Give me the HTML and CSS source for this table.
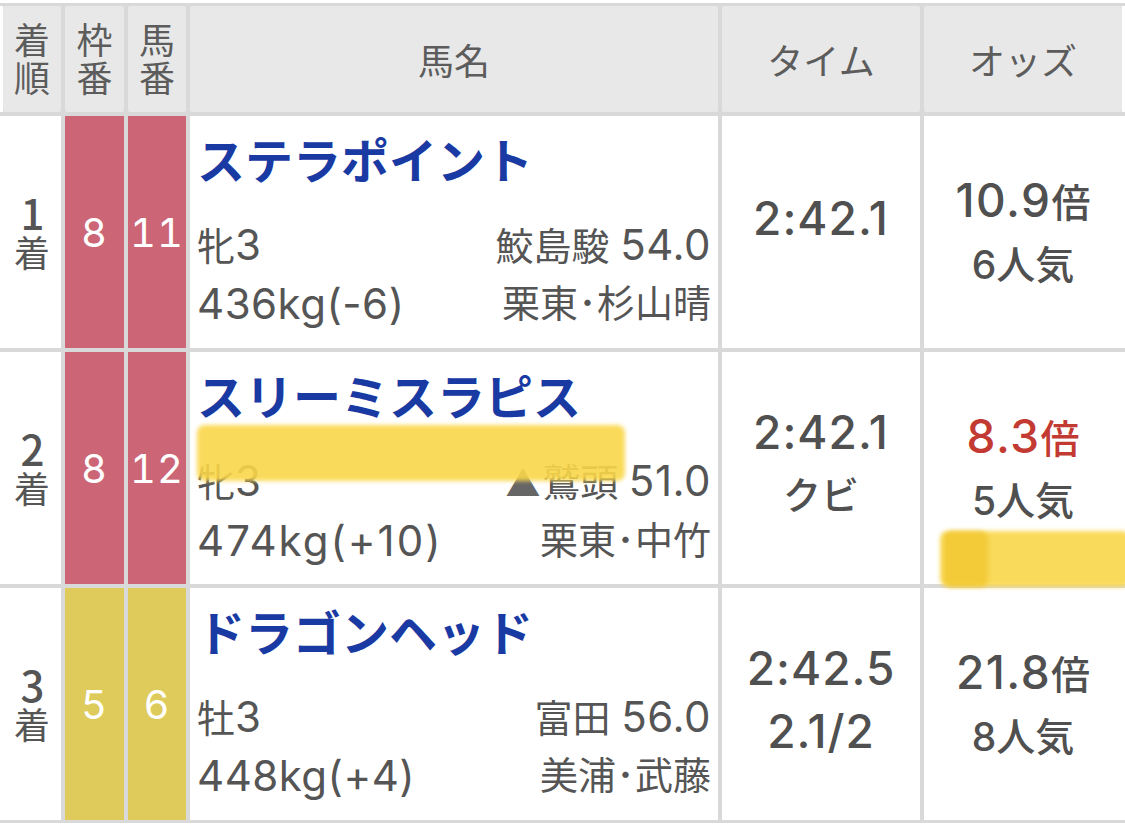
FILE: index.html
```html
<!DOCTYPE html>
<html lang="ja">
<head>
<meta charset="utf-8">
<title>レース結果</title>
<link rel="stylesheet" href="styles.css">
</head>
<body>
<div class="table">
  <div class="row head">
    <div class="cell c1"><span class="vert">着順</span></div>
    <div class="cell c2"><span class="vert">枠番</span></div>
    <div class="cell c3"><span class="vert">馬番</span></div>
    <div class="cell c4">馬名</div>
    <div class="cell c5">タイム</div>
    <div class="cell c6">オッズ</div>
  </div>

  <div class="row">
    <div class="cell c1 rank"><span class="vert"><span class="rn">1</span>着</span></div>
    <div class="cell c2 waku red">8</div>
    <div class="cell c3 waku red">11</div>
    <div class="cell c4 horse">
      <div class="name">ステラポイント</div>
      <div class="info">
        <div class="line"><span>牝<span class="num">3</span></span><span>鮫島駿 <span class="num">54.0</span></span></div>
        <div class="line"><span class="num">436kg(-6)</span><span>栗東･杉山晴</span></div>
      </div>
    </div>
    <div class="cell c5 time solo"><div class="t1">2:42.1</div></div>
    <div class="cell c6 odds"><div class="o1"><span class="num">10.9</span>倍</div><div class="o2">6人気</div></div>
  </div>

  <div class="row">
    <div class="cell c1 rank"><span class="vert"><span class="rn">2</span>着</span></div>
    <div class="cell c2 waku red">8</div>
    <div class="cell c3 waku red">12</div>
    <div class="cell c4 horse">
      <div class="name">スリーミスラピス</div>
      <div class="info">
        <div class="line"><span>牝<span class="num">3</span></span><span><span class="tri">▲</span>鷲頭 <span class="num">51.0</span></span></div>
        <div class="line"><span class="num wide">474kg(+10)</span><span>栗東･中竹</span></div>
      </div>
    </div>
    <div class="cell c5 time"><div class="t1">2:42.1</div><div class="t2">クビ</div></div>
    <div class="cell c6 odds"><div class="o1 hot"><span class="num">8.3</span>倍</div><div class="o2">5人気</div></div>
  </div>

  <div class="row">
    <div class="cell c1 rank"><span class="vert"><span class="rn">3</span>着</span></div>
    <div class="cell c2 waku yellow">5</div>
    <div class="cell c3 waku yellow">6</div>
    <div class="cell c4 horse">
      <div class="name">ドラゴンヘッド</div>
      <div class="info">
        <div class="line"><span>牡<span class="num">3</span></span><span>富田 <span class="num">56.0</span></span></div>
        <div class="line"><span class="num">448kg(+4)</span><span>美浦･武藤</span></div>
      </div>
    </div>
    <div class="cell c5 time"><div class="t1">2:42.5</div><div class="t2 latin">2.1/2</div></div>
    <div class="cell c6 odds"><div class="o1"><span class="num">21.8</span>倍</div><div class="o2">8人気</div></div>
  </div>

  <div class="mark mark-a"></div>
  <div class="mark mark-b"></div>
  <div class="mark mark-c"></div>
</div>
</body>
</html>
```

FILE: styles.css
```css
body {
  margin: 0;
  background: #fff;
  font-family: Inter, "Noto Sans CJK JP", sans-serif;
  color: #555;
}

.table {
  position: relative;
  margin-top: 3px;
  padding: 3px 0;
  background: #d9d9d9;
  display: flex;
  flex-direction: column;
  gap: 4px;
}

.row {
  display: flex;
  gap: 4px;
  height: 232px;
  border-left: 3px solid #fff;
  border-right: 3px solid #fff;
}

.row.head {
  height: 106px;
}

.cell {
  flex: none;
  background: #fff;
  box-sizing: border-box;
}

.c1 { width: 58px; }
.c2 { width: 59px; }
.c3 { width: 58px; }
.c4 { width: 528px; }
.c5 { width: 198px; }
.c6 { width: 198px; }

.head .cell {
  background: #e8e8e8;
  border-radius: 2px;
  display: flex;
  align-items: center;
  justify-content: center;
  font-family: "Noto Sans CJK JP", sans-serif;
  font-size: 36px;
  line-height: 38px;
  color: #5c5c5c;
}

.vert {
  writing-mode: vertical-rl;
  text-orientation: upright;
  letter-spacing: 2px;
  line-height: 36px;
  margin-top: 2px;
}

.rank {
  display: flex;
  align-items: center;
  justify-content: center;
  font-family: "Noto Sans CJK JP", sans-serif;
  font-size: 36px;
  color: #555;
}

.rank .rn {
  font-size: 42px;
  letter-spacing: 0;
  font-weight: 500;
}

.waku {
  display: flex;
  align-items: center;
  justify-content: center;
  color: #fff;
  font-size: 40px;
  letter-spacing: 1px;
  font-variant-numeric: tabular-nums;
}

.waku.red { background: #cc6677; }
.waku.yellow { background: #decb5b; }

.horse {
  padding: 18px 7px 0 7px;
}

.name {
  font-size: 48px;
  line-height: 56px;
  font-weight: 700;
  color: #1a3aa3;
  white-space: nowrap;
}

.info {
  margin-top: 26px;
}

.line {
  display: flex;
  justify-content: space-between;
  font-size: 38px;
  line-height: 57px;
  white-space: nowrap;
}

.line .num {
  font-size: 42px;
  letter-spacing: 0.5px;
}

.line .num.wide {
  letter-spacing: 2px;
}

.tri {
  font-size: 36px;
  color: #666;
  margin-right: 1px;
}

.time {
  display: flex;
  flex-direction: column;
  align-items: center;
  padding-top: 53px;
  font-size: 38px;
  font-weight: 500;
  color: #505050;
}

.time.solo {
  padding-top: 75px;
}

.t1 {
  line-height: 54px;
  font-size: 46px;
  letter-spacing: 1px;
}

.t2 {
  line-height: 72px;
}

.t2.latin {
  font-size: 46px;
  letter-spacing: 1px;
}

.odds {
  display: flex;
  flex-direction: column;
  align-items: center;
  justify-content: center;
  font-size: 39px;
  font-weight: 500;
  color: #505050;
  line-height: 62px;
}

.odds .num {
  font-size: 46px;
  letter-spacing: 1.5px;
}

.o1.hot { color: #c23a32; }

.mark {
  position: absolute;
  background: rgba(249, 214, 72, 0.9);
  filter: blur(2px);
  border-radius: 8px;
}

.mark-a {
  left: 197px;
  top: 422px;
  width: 428px;
  height: 56px;
}

.mark-b {
  left: 940px;
  top: 528px;
  width: 190px;
  height: 56px;
}

.mark-c {
  left: 944px;
  top: 528px;
  width: 44px;
  height: 56px;
  background: rgba(240, 198, 46, 0.75);
}
```
